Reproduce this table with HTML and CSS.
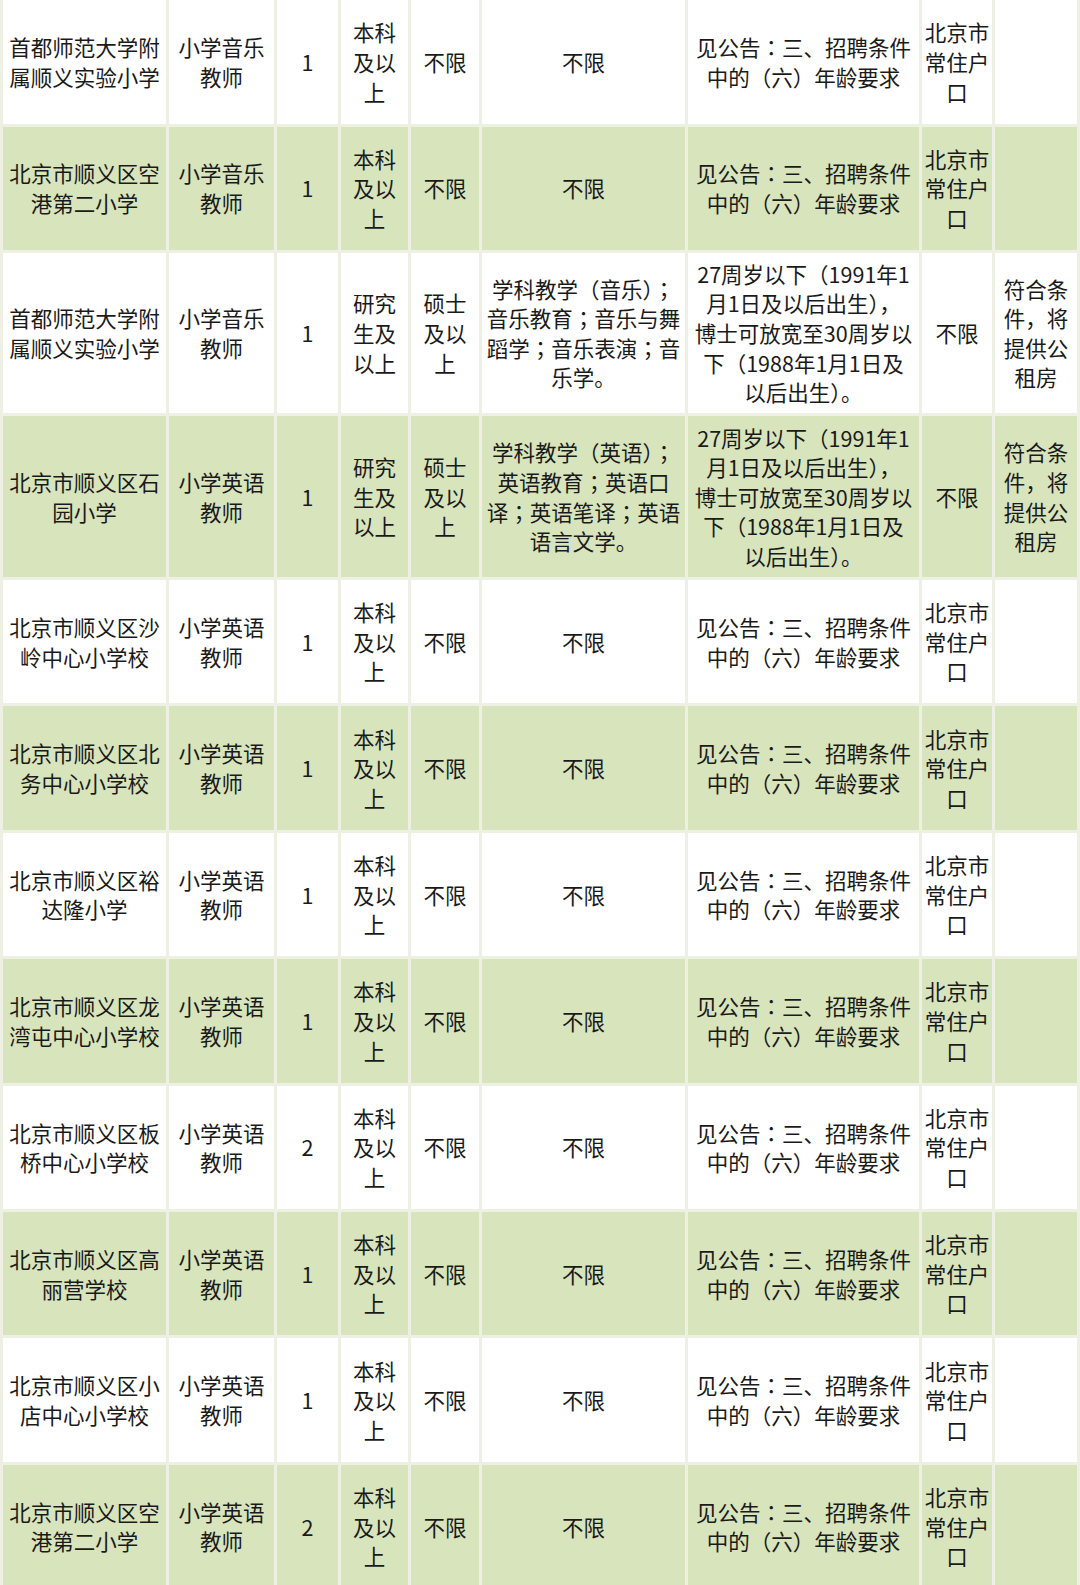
FILE: index.html
```html
<!DOCTYPE html>
<html lang="zh-CN">
<head>
<meta charset="utf-8">
<title>招聘岗位表</title>
<link rel="stylesheet" href="styles.css">
</head>
<body>
<div class="sheet">
  <div class="row">
    <div class="cell">首都师范大学附<br>属顺义实验小学</div>
    <div class="cell">小学音乐<br>教师</div>
    <div class="cell">1</div>
    <div class="cell">本科<br>及以<br>上</div>
    <div class="cell">不限</div>
    <div class="cell">不限</div>
    <div class="cell"><div class="txt">见公告<span class="p" lang="ja">：</span>三、招聘条件<br>中的（六）年龄要求</div></div>
    <div class="cell">北京市<br>常住户<br>口</div>
    <div class="cell"></div>
  </div>
  <div class="row alt">
    <div class="cell">北京市顺义区空<br>港第二小学</div>
    <div class="cell">小学音乐<br>教师</div>
    <div class="cell">1</div>
    <div class="cell">本科<br>及以<br>上</div>
    <div class="cell">不限</div>
    <div class="cell">不限</div>
    <div class="cell"><div class="txt">见公告<span class="p" lang="ja">：</span>三、招聘条件<br>中的（六）年龄要求</div></div>
    <div class="cell">北京市<br>常住户<br>口</div>
    <div class="cell"></div>
  </div>
  <div class="row">
    <div class="cell">首都师范大学附<br>属顺义实验小学</div>
    <div class="cell">小学音乐<br>教师</div>
    <div class="cell">1</div>
    <div class="cell">研究<br>生及<br>以上</div>
    <div class="cell">硕士<br>及以<br>上</div>
    <div class="cell"><div class="txt">学科教学（音乐）<span class="p" lang="ja">；</span><br>音乐教育<span class="p" lang="ja">；</span>音乐与舞<br>蹈学<span class="p" lang="ja">；</span>音乐表演<span class="p" lang="ja">；</span>音<br>乐学。</div></div>
    <div class="cell">27周岁以下（1991年1<br>月1日及以后出生），<br>博士可放宽至30周岁以<br>下（1988年1月1日及<br>以后出生）。</div>
    <div class="cell">不限</div>
    <div class="cell">符合条<br>件，将<br>提供公<br>租房</div>
  </div>
  <div class="row alt">
    <div class="cell">北京市顺义区石<br>园小学</div>
    <div class="cell">小学英语<br>教师</div>
    <div class="cell">1</div>
    <div class="cell">研究<br>生及<br>以上</div>
    <div class="cell">硕士<br>及以<br>上</div>
    <div class="cell"><div class="txt">学科教学（英语）<span class="p" lang="ja">；</span><br>英语教育<span class="p" lang="ja">；</span>英语口<br>译<span class="p" lang="ja">；</span>英语笔译<span class="p" lang="ja">；</span>英语<br>语言文学。</div></div>
    <div class="cell">27周岁以下（1991年1<br>月1日及以后出生），<br>博士可放宽至30周岁以<br>下（1988年1月1日及<br>以后出生）。</div>
    <div class="cell">不限</div>
    <div class="cell">符合条<br>件，将<br>提供公<br>租房</div>
  </div>
  <div class="row">
    <div class="cell">北京市顺义区沙<br>岭中心小学校</div>
    <div class="cell">小学英语<br>教师</div>
    <div class="cell">1</div>
    <div class="cell">本科<br>及以<br>上</div>
    <div class="cell">不限</div>
    <div class="cell">不限</div>
    <div class="cell"><div class="txt">见公告<span class="p" lang="ja">：</span>三、招聘条件<br>中的（六）年龄要求</div></div>
    <div class="cell">北京市<br>常住户<br>口</div>
    <div class="cell"></div>
  </div>
  <div class="row alt">
    <div class="cell">北京市顺义区北<br>务中心小学校</div>
    <div class="cell">小学英语<br>教师</div>
    <div class="cell">1</div>
    <div class="cell">本科<br>及以<br>上</div>
    <div class="cell">不限</div>
    <div class="cell">不限</div>
    <div class="cell"><div class="txt">见公告<span class="p" lang="ja">：</span>三、招聘条件<br>中的（六）年龄要求</div></div>
    <div class="cell">北京市<br>常住户<br>口</div>
    <div class="cell"></div>
  </div>
  <div class="row">
    <div class="cell">北京市顺义区裕<br>达隆小学</div>
    <div class="cell">小学英语<br>教师</div>
    <div class="cell">1</div>
    <div class="cell">本科<br>及以<br>上</div>
    <div class="cell">不限</div>
    <div class="cell">不限</div>
    <div class="cell"><div class="txt">见公告<span class="p" lang="ja">：</span>三、招聘条件<br>中的（六）年龄要求</div></div>
    <div class="cell">北京市<br>常住户<br>口</div>
    <div class="cell"></div>
  </div>
  <div class="row alt">
    <div class="cell">北京市顺义区龙<br>湾屯中心小学校</div>
    <div class="cell">小学英语<br>教师</div>
    <div class="cell">1</div>
    <div class="cell">本科<br>及以<br>上</div>
    <div class="cell">不限</div>
    <div class="cell">不限</div>
    <div class="cell"><div class="txt">见公告<span class="p" lang="ja">：</span>三、招聘条件<br>中的（六）年龄要求</div></div>
    <div class="cell">北京市<br>常住户<br>口</div>
    <div class="cell"></div>
  </div>
  <div class="row">
    <div class="cell">北京市顺义区板<br>桥中心小学校</div>
    <div class="cell">小学英语<br>教师</div>
    <div class="cell">2</div>
    <div class="cell">本科<br>及以<br>上</div>
    <div class="cell">不限</div>
    <div class="cell">不限</div>
    <div class="cell"><div class="txt">见公告<span class="p" lang="ja">：</span>三、招聘条件<br>中的（六）年龄要求</div></div>
    <div class="cell">北京市<br>常住户<br>口</div>
    <div class="cell"></div>
  </div>
  <div class="row alt">
    <div class="cell">北京市顺义区高<br>丽营学校</div>
    <div class="cell">小学英语<br>教师</div>
    <div class="cell">1</div>
    <div class="cell">本科<br>及以<br>上</div>
    <div class="cell">不限</div>
    <div class="cell">不限</div>
    <div class="cell"><div class="txt">见公告<span class="p" lang="ja">：</span>三、招聘条件<br>中的（六）年龄要求</div></div>
    <div class="cell">北京市<br>常住户<br>口</div>
    <div class="cell"></div>
  </div>
  <div class="row">
    <div class="cell">北京市顺义区小<br>店中心小学校</div>
    <div class="cell">小学英语<br>教师</div>
    <div class="cell">1</div>
    <div class="cell">本科<br>及以<br>上</div>
    <div class="cell">不限</div>
    <div class="cell">不限</div>
    <div class="cell"><div class="txt">见公告<span class="p" lang="ja">：</span>三、招聘条件<br>中的（六）年龄要求</div></div>
    <div class="cell">北京市<br>常住户<br>口</div>
    <div class="cell"></div>
  </div>
  <div class="row alt">
    <div class="cell">北京市顺义区空<br>港第二小学</div>
    <div class="cell">小学英语<br>教师</div>
    <div class="cell">2</div>
    <div class="cell">本科<br>及以<br>上</div>
    <div class="cell">不限</div>
    <div class="cell">不限</div>
    <div class="cell"><div class="txt">见公告<span class="p" lang="ja">：</span>三、招聘条件<br>中的（六）年龄要求</div></div>
    <div class="cell">北京市<br>常住户<br>口</div>
    <div class="cell"></div>
  </div>
</div>
</body>
</html>
```

FILE: styles.css
```css
html, body {
  margin: 0;
  padding: 0;
  background: #ffffff;
}

body {
  width: 1080px;
  height: 1585px;
  overflow: hidden;
  font-family: "Noto Sans CJK SC", "Noto Sans", sans-serif;
  color: #1a1a1a;
}

.sheet {
  display: grid;
  grid-template-columns: 163px 105px 61px 67px 68px 203px 231px 70px 82px;
  grid-template-rows: 123.5px 123px 160.5px 161px repeat(8, 123.4px);
  gap: 3px;
  padding: 0 3px 3px 3px;
  background: #edf0e3;
  width: 1074px;
}

.row {
  display: contents;
}

.cell {
  display: flex;
  align-items: center;
  justify-content: center;
  text-align: center;
  background: #ffffff;
  font-size: 21.5px;
  line-height: 29.6px;
  white-space: nowrap;
  overflow: hidden;
}

.row.alt .cell {
  background: #d8e4bc;
}

.txt {
  text-align: center;
}

/* centred full-width colon / semicolon, as in the source font */
.p {
  font-family: "Noto Sans CJK JP", "Noto Sans CJK SC", sans-serif;
}
```
